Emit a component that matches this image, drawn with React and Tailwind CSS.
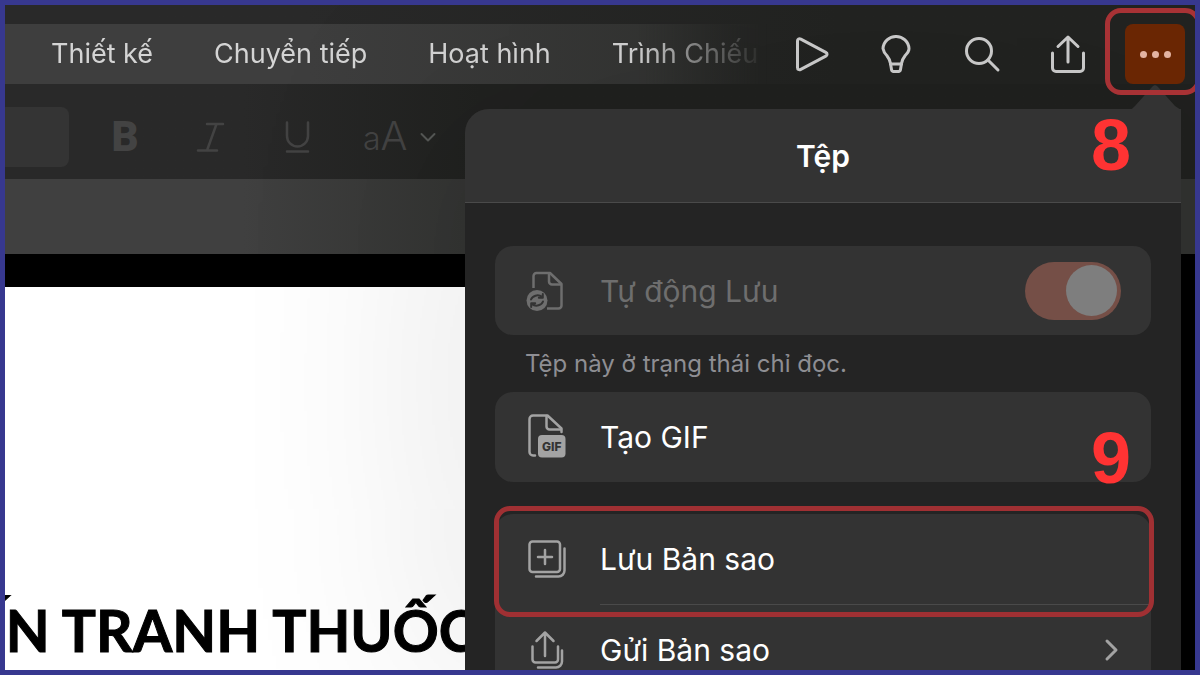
import React from "react";

const tabs = ["Thiết kế", "Chuyển tiếp", "Hoạt hình", "Trình Chiếu"];

function Stroke({ className, viewBox, width = 3, children }) {
  return (
    <svg
      className={className}
      viewBox={viewBox}
      fill="none"
      stroke="currentColor"
      strokeWidth={width}
      strokeLinecap="round"
      strokeLinejoin="round"
      aria-hidden="true"
    >
      {children}
    </svg>
  );
}

function PlayIcon() {
  return (
    <Stroke className="h-10 w-10" viewBox="0 0 40 40">
      <path d="M7.500 7v26.500c0 2 1.600 2.800 3.300 1.900l25-13.300c1.700-.9 1.700-2.900 0-3.800l-25-13.200C9.100 4.200 7.500 5 7.500 7Z" />
    </Stroke>
  );
}

function BulbIcon() {
  return (
    <Stroke className="h-10 w-10" viewBox="0 0 40 40">
      <path d="M14.500 29.500c-.6-3.500-1.800-5.600-3.700-8A12.700 12.700 0 0 1 7 14.500 12.800 12.800 0 0 1 20 2.500a12.800 12.800 0 0 1 13 12c0 2.500-1.400 4.600-3.800 7-1.900 2.400-3.100 4.500-3.700 8l-1 6c-.2 1.200-.8 1.900-2 1.900h-5c-1.200 0-1.800-.7-2-1.900l-1-6Z" />
      <path d="M14.500 30h11" />
    </Stroke>
  );
}

function SearchIcon() {
  return (
    <Stroke className="h-10 w-10" viewBox="0 0 40 40">
      <circle cx="17" cy="17" r="12.500" />
      <path d="M26.500 26.500 36 36" />
    </Stroke>
  );
}

function ShareIcon() {
  return (
    <Stroke className="h-10 w-10" viewBox="0 0 40 40">
      <path d="M20 28V3.500M10 12.500 20 3l10 9.500M4.500 19v15a3.500 3.500 0 0 0 3.500 3.500h24a3.500 3.500 0 0 0 3.500-3.500V19" />
    </Stroke>
  );
}

function AutoSaveIcon() {
  return (
    <svg className="h-12 w-11 shrink-0" viewBox="0 0 44 48" fill="none" aria-hidden="true">
      <g stroke="currentColor" strokeWidth="2.500" strokeLinejoin="round">
        <path d="M8.500 21V9a3 3 0 0 1 3-3H25L36.500 17v21.500a3 3 0 0 1-3 3H22" />
        <path d="M24 6v8.500a3 3 0 0 0 3 3h9" />
      </g>
      <circle cx="12" cy="33.500" r="10.500" fill="currentColor" />
      <g stroke="#333333" strokeWidth="2" strokeLinecap="round" strokeLinejoin="round">
        <path d="M6 32.500c1.200-3.600 7-5.800 11.200-2.500M17.800 27v3.700h-4" />
        <path d="M18 34.500c-1.200 3.600-7 5.800-11.200 2.500M6.200 40v-3.700h4" />
      </g>
    </svg>
  );
}

function GifIcon() {
  return (
    <svg className="h-12 w-11 shrink-0" viewBox="0 0 44 48" fill="none" aria-hidden="true">
      <g stroke="currentColor" strokeWidth="2.500" strokeLinejoin="round" strokeLinecap="round">
        <path d="M10 42.500H8A3.500 3.500 0 0 1 4.500 39V6A3.500 3.500 0 0 1 8 2.500h14.500L36.500 15.500V19" />
        <path d="M21.500 3v10.500a3 3 0 0 0 3 3H36" />
      </g>
      <rect x="13" y="22" width="27.500" height="22.500" rx="4" fill="currentColor" />
      <text
        x="26.800"
        y="37.700"
        textAnchor="middle"
        className="fill-[#333333] font-['Inter',sans-serif] text-[12px] font-extrabold"
      >
        GIF
      </text>
    </svg>
  );
}

function SaveCopyIcon() {
  return (
    <Stroke className="h-12 w-11 shrink-0" viewBox="0 0 44 48" width={2.5}>
      <rect x="4.500" y="6.500" width="30.500" height="30.500" rx="3" />
      <path d="M20 15v14M13 22h14M39.500 13.500v22a6 6 0 0 1-6 6H11" />
    </Stroke>
  );
}

function SendCopyIcon() {
  return (
    <Stroke className="h-12 w-11 shrink-0" viewBox="0 0 44 48" width={2.5}>
      <path d="M20 30V7M11.500 15 20 6.500l8.500 8.500M7.500 20.500v13a3 3 0 0 0 3 3h19.500a3 3 0 0 0 3-3v-13" />
      <path d="M37 24.500v11a6 6 0 0 1-6 6H13" />
    </Stroke>
  );
}

function Callout({ className, children }) {
  return (
    <span
      className={`pointer-events-none absolute font-['Liberation_Sans',sans-serif] text-[72px] leading-[72px] font-bold text-[#ff3333] ${className}`}
    >
      {children}
    </span>
  );
}

function MenuRow({ icon, label, children }) {
  return (
    <button
      type="button"
      className="flex h-[90px] w-full items-center gap-[31px] pr-8 pl-[30px] text-left text-[#a3a3a3]"
    >
      {icon}
      <span className="flex-1 text-[30px] leading-10 text-white">{label}</span>
      {children}
    </button>
  );
}

function TopBar() {
  return (
    <header className="flex items-center bg-linear-90 from-[#292929] from-25% to-[#222321] to-70% pt-[19px]">
      <nav
        aria-label="Ribbon"
        className="flex h-[60px] min-w-0 flex-1 items-center gap-[61px] overflow-hidden bg-linear-90 from-[#3e3e3e] from-40% to-[#30312f] pl-[46px] text-[27px] whitespace-nowrap text-[#d4d4d4] [mask-image:linear-gradient(90deg,#000_83%,transparent_100%)]"
      >
        {tabs.map((tab) => (
          <a key={tab} href="#" className="shrink-0">
            {tab}
          </a>
        ))}
      </nav>
      <div className="flex h-[60px] shrink-0 items-center pr-[10px] text-[#cfcfcf]">
        <button type="button" aria-label="Play" className="flex w-[86px] justify-center">
          <PlayIcon />
        </button>
        <button type="button" aria-label="Ideas" className="flex w-[86px] justify-center">
          <BulbIcon />
        </button>
        <button type="button" aria-label="Search" className="flex w-[86px] justify-center">
          <SearchIcon />
        </button>
        <button type="button" aria-label="Share" className="flex w-[86px] justify-center">
          <ShareIcon />
        </button>
        <div className="relative z-20 ml-[14px]">
          <button
            type="button"
            aria-label="More"
            className="flex size-[60px] items-center justify-center gap-[5px] rounded-lg bg-[#6a2603]"
          >
            <span className="size-[7px] rounded-full bg-[#e3b3a1]" />
            <span className="size-[7px] rounded-full bg-[#e3b3a1]" />
            <span className="size-[7px] rounded-full bg-[#e3b3a1]" />
          </button>
          <span className="pointer-events-none absolute -top-4 -right-4 -bottom-[11px] -left-5 rounded-2xl border-5 border-[#a83235]" />
        </div>
      </div>
    </header>
  );
}

function FormatBar() {
  return (
    <div className="flex h-[95px] items-center bg-linear-90 from-[#292929] from-20% to-[#20211f] to-40% pt-[11px] text-[#434343]">
      <input
        aria-label="Font size"
        className="h-[60px] w-16 rounded-r-lg bg-[#343434]"
        readOnly
      />
      <button
        type="button"
        aria-label="Bold"
        className="ml-[26px] w-[60px] text-center font-['Roboto',sans-serif] text-[42px] leading-[60px] font-black"
      >
        B
      </button>
      <button type="button" aria-label="Italic" className="ml-[26px] flex w-[60px] justify-center">
        <Stroke className="h-8 w-8" viewBox="0 0 32 32" width={2.5}>
          <path d="M12 3h16M3 29.500h19M21.500 3 12 29.500" />
        </Stroke>
      </button>
      <button type="button" aria-label="Underline" className="ml-[26px] flex w-[60px] justify-center">
        <Stroke className="h-8 w-8" viewBox="0 0 32 32" width={2.5}>
          <path d="M6 1.500v13.500a10.500 10.500 0 0 0 21 0V1.500M6 30.500h21" />
        </Stroke>
      </button>
      <button type="button" aria-label="Text size" className="ml-9 flex items-center gap-3">
        <span className="text-[40px] leading-[60px] font-light">
          <span className="text-[32px]">a</span>A
        </span>
        <Stroke className="h-4 w-4 text-[#565856]" viewBox="0 0 16 16" width={2}>
          <path d="m1.500 5 6.500 6.500L14.500 5" />
        </Stroke>
      </button>
    </div>
  );
}

function FileMenu() {
  return (
    <section
      aria-label="Tệp"
      className="absolute top-[104px] right-[14px] bottom-0 left-[460px] z-10 rounded-tl-[24px] bg-[#242424] shadow-[0_0_240px_rgba(0,0,0,0.14)]"
    >
      <svg
        className="absolute -top-[25px] right-0 h-[26px] w-[52px] fill-[#333333]"
        viewBox="0 0 52 26"
        aria-hidden="true"
      >
        <path d="M0 26c3-1 4-2 6-4L23 3c2-2.500 4-2.500 6 0l17 19 6 4Z" />
      </svg>
      <header className="relative flex h-[94px] items-center justify-center rounded-tl-[24px] border-b border-[#4a4a4a] bg-[#333333]">
        <h2 className="text-[30px] leading-10 font-semibold text-white">Tệp</h2>
        <Callout className="top-0 right-[50px]">8</Callout>
      </header>
      <div className="flex flex-col px-[30px] pt-[43px]">
        <label className="flex h-[89px] items-center gap-[31px] rounded-[18px] bg-[#333333] pr-[30px] pl-[30px] text-[#6e6e6e]">
          <AutoSaveIcon />
          <span className="flex-1 text-[30px] leading-10">Tự động Lưu</span>
          <input
            type="checkbox"
            role="switch"
            defaultChecked
            disabled
            className="flex h-[58px] w-24 appearance-none items-center justify-end rounded-full bg-[#754f47] pr-1 before:size-[51px] before:rounded-full before:bg-[#7e7e7e] before:content-['']"
          />
        </label>
        <p className="px-[30px] py-3 text-[24px] leading-[33px] text-[#8e8e93]">
          Tệp này ở trạng thái chỉ đọc.
        </p>
        <div className="relative rounded-[18px] bg-[#333333]">
          <MenuRow icon={<GifIcon />} label="Tạo GIF" />
          <Callout className="top-[30px] right-5">9</Callout>
        </div>
        <div className="mt-8 rounded-t-[18px] bg-[#333333]">
          <div className="relative">
            <MenuRow icon={<SaveCopyIcon />} label="Lưu Bản sao" />
            <div className="ml-[105px] h-px bg-[#4a4a4a]" />
            <span className="pointer-events-none absolute -top-2 -right-[3px] -bottom-3 -left-px rounded-2xl border-5 border-[#a03033]" />
          </div>
          <MenuRow icon={<SendCopyIcon />} label="Gửi Bản sao">
            <Stroke className="h-6 w-4" viewBox="0 0 16 24" width={3}>
              <path d="m4 3 9 9-9 9" />
            </Stroke>
          </MenuRow>
        </div>
      </div>
    </section>
  );
}

export default function App() {
  return (
    <div className="relative flex h-screen flex-col overflow-hidden border-5 border-[#37388f] bg-black font-['Inter',sans-serif]">
      <TopBar />
      <FormatBar />
      <div className="h-[75px] shrink-0 bg-linear-90 from-[#404040] from-20% to-[#323331] to-40%" />
      <main className="mt-[33px] mr-4 flex flex-1 flex-col justify-end overflow-hidden bg-white">
        <h1 className="-ml-8 pb-2 font-['Lato',sans-serif] text-[57px] leading-[64px] font-bold whitespace-nowrap text-black [-webkit-text-stroke:1px_#000]">
          ẾN TRANH THUỐC
        </h1>
      </main>
      <FileMenu />
    </div>
  );
}
